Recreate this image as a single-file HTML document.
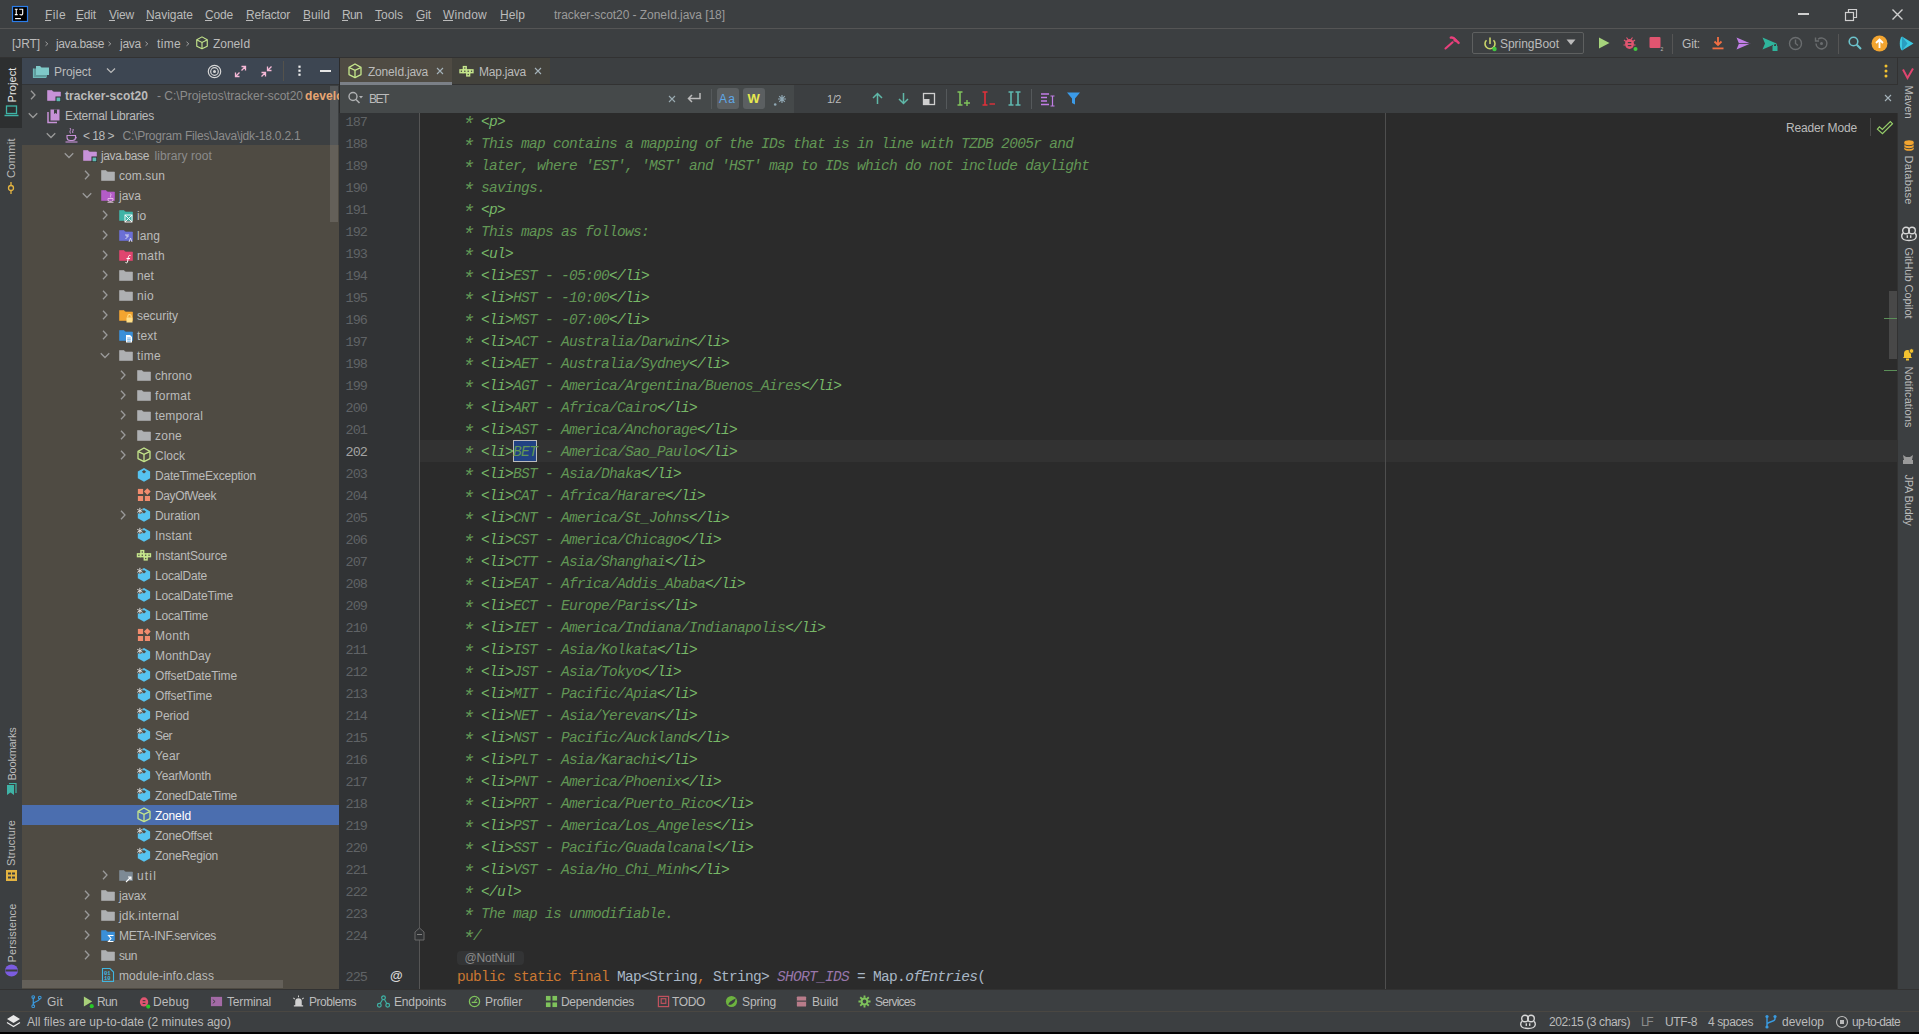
<!DOCTYPE html><html><head><meta charset="utf-8"><style>
*{margin:0;padding:0;box-sizing:border-box}
html,body{width:1919px;height:1034px;overflow:hidden;background:#3c3f41;font-family:"Liberation Sans",sans-serif;font-size:12px;color:#bbbbbb}
.a{position:absolute;white-space:nowrap}
.t{position:absolute;white-space:nowrap;line-height:16px}
svg{position:absolute;overflow:visible}
.code{position:absolute;left:425px;font-family:"Liberation Mono",monospace;font-size:14.5px;letter-spacing:-0.7px;line-height:22px;padding-top:1px;white-space:pre;color:#629755}
.code i{font-style:italic}
.ln{position:absolute;left:339px;width:28px;text-align:right;font-family:"Liberation Mono",monospace;font-size:13.5px;letter-spacing:-0.95px;padding-top:1.5px;line-height:22px;color:#606366}

.tg{color:#77b767;font-style:italic}
.st{display:inline-block;transform:translate(-1.2px,3.4px) scale(1.4)}
</style></head><body>
<div class="a" style="left:0;top:0;width:1919px;height:28px;background:#3c3f41"></div>
<div class="a" style="left:0;top:28px;width:1919px;height:1px;background:#555555"></div>
<div class="a" style="left:0;top:29px;width:1919px;height:28px;background:#3c3f41"></div>
<div class="a" style="left:0;top:57px;width:1919px;height:1px;background:#323232"></div>
<div class="a" style="left:0;top:58px;width:22px;height:931px;background:#3c3f41"></div>
<div class="a" style="left:0;top:58px;width:22px;height:70px;background:#2d2f30"></div>
<div class="a" style="left:22px;top:58px;width:317px;height:26px;background:#3d4652"></div>
<div class="a" style="left:22px;top:84px;width:317px;height:1px;background:#323436"></div>
<div class="a" style="left:22px;top:85px;width:317px;height:60px;background:#3c3f41"></div>
<div class="a" style="left:22px;top:145px;width:317px;height:844px;background:#4f4b43"></div>
<div class="a" style="left:22px;top:805px;width:317px;height:20px;background:#4b6eaf"></div>
<div class="a" style="left:330px;top:86px;width:8px;height:136px;background:rgba(255,255,255,0.12)"></div>
<div class="a" style="left:22px;top:980px;width:261px;height:8px;background:rgba(255,255,255,0.12)"></div>
<div class="a" style="left:339px;top:58px;width:1px;height:931px;background:#2b2b2b"></div>
<div class="a" style="left:340px;top:58px;width:1558px;height:27px;background:#3c3f41"></div>
<div class="a" style="left:340px;top:58px;width:112px;height:27px;background:#4f4b43"></div>
<div class="a" style="left:452px;top:58px;width:98px;height:26px;background:#43423c"></div>
<div class="a" style="left:452px;top:84px;width:1446px;height:1px;background:#323232"></div>
<div class="a" style="left:340px;top:82px;width:112px;height:3px;background:#7b8087"></div>
<div class="a" style="left:340px;top:85px;width:1558px;height:28px;background:#45494a"></div>
<div class="a" style="left:339px;top:113px;width:1559px;height:876px;background:#2b2b2b;overflow:hidden" id="ed"></div>
<div class="a" style="left:339px;top:113px;width:80px;height:876px;background:#313335"></div>
<div class="a" style="left:419px;top:113px;width:1px;height:876px;background:#555555"></div>
<div class="a" style="left:420px;top:440px;width:1478px;height:22px;background:#323232"></div>
<div class="a" style="left:1385px;top:113px;width:1px;height:876px;background:#4e4e4e"></div>
<div class="a" style="left:1898px;top:58px;width:21px;height:931px;background:#3c3f41"></div>
<div class="a" style="left:1897px;top:58px;width:1px;height:931px;background:#323232"></div>
<div class="a" style="left:0;top:989px;width:1919px;height:22px;background:#3c3f41"></div>
<div class="a" style="left:0;top:989px;width:1919px;height:1px;background:#323232"></div>
<div class="a" style="left:0;top:1011px;width:1919px;height:1px;background:#4a4742"></div>
<div class="a" style="left:0;top:1012px;width:1919px;height:20px;background:#3c3f41"></div>
<div class="a" style="left:0;top:1032px;width:1919px;height:2px;background:#000"></div>
<div class="a" style="left:339px;top:113px;width:1559px;height:876px;overflow:hidden">
<div class="ln" style="left:0;top:-3px">187</div>
<div class="code" style="left:86px;top:-3px"><i>     <span class="st">*</span> </i><span class="tg">&lt;p&gt;</span></div>
<div class="ln" style="left:0;top:19px">188</div>
<div class="code" style="left:86px;top:19px"><i>     <span class="st">*</span> This map contains a mapping of the IDs that is in line with TZDB 2005r and</i></div>
<div class="ln" style="left:0;top:41px">189</div>
<div class="code" style="left:86px;top:41px"><i>     <span class="st">*</span> later, where &#x27;EST&#x27;, &#x27;MST&#x27; and &#x27;HST&#x27; map to IDs which do not include daylight</i></div>
<div class="ln" style="left:0;top:63px">190</div>
<div class="code" style="left:86px;top:63px"><i>     <span class="st">*</span> savings.</i></div>
<div class="ln" style="left:0;top:85px">191</div>
<div class="code" style="left:86px;top:85px"><i>     <span class="st">*</span> </i><span class="tg">&lt;p&gt;</span></div>
<div class="ln" style="left:0;top:107px">192</div>
<div class="code" style="left:86px;top:107px"><i>     <span class="st">*</span> This maps as follows:</i></div>
<div class="ln" style="left:0;top:129px">193</div>
<div class="code" style="left:86px;top:129px"><i>     <span class="st">*</span> </i><span class="tg">&lt;ul&gt;</span></div>
<div class="ln" style="left:0;top:151px">194</div>
<div class="code" style="left:86px;top:151px"><i>     <span class="st">*</span> </i><span class="tg">&lt;li&gt;</span><i>EST - -05:00</i><span class="tg">&lt;/li&gt;</span></div>
<div class="ln" style="left:0;top:173px">195</div>
<div class="code" style="left:86px;top:173px"><i>     <span class="st">*</span> </i><span class="tg">&lt;li&gt;</span><i>HST - -10:00</i><span class="tg">&lt;/li&gt;</span></div>
<div class="ln" style="left:0;top:195px">196</div>
<div class="code" style="left:86px;top:195px"><i>     <span class="st">*</span> </i><span class="tg">&lt;li&gt;</span><i>MST - -07:00</i><span class="tg">&lt;/li&gt;</span></div>
<div class="ln" style="left:0;top:217px">197</div>
<div class="code" style="left:86px;top:217px"><i>     <span class="st">*</span> </i><span class="tg">&lt;li&gt;</span><i>ACT - Australia/Darwin</i><span class="tg">&lt;/li&gt;</span></div>
<div class="ln" style="left:0;top:239px">198</div>
<div class="code" style="left:86px;top:239px"><i>     <span class="st">*</span> </i><span class="tg">&lt;li&gt;</span><i>AET - Australia/Sydney</i><span class="tg">&lt;/li&gt;</span></div>
<div class="ln" style="left:0;top:261px">199</div>
<div class="code" style="left:86px;top:261px"><i>     <span class="st">*</span> </i><span class="tg">&lt;li&gt;</span><i>AGT - America/Argentina/Buenos_Aires</i><span class="tg">&lt;/li&gt;</span></div>
<div class="ln" style="left:0;top:283px">200</div>
<div class="code" style="left:86px;top:283px"><i>     <span class="st">*</span> </i><span class="tg">&lt;li&gt;</span><i>ART - Africa/Cairo</i><span class="tg">&lt;/li&gt;</span></div>
<div class="ln" style="left:0;top:305px">201</div>
<div class="code" style="left:86px;top:305px"><i>     <span class="st">*</span> </i><span class="tg">&lt;li&gt;</span><i>AST - America/Anchorage</i><span class="tg">&lt;/li&gt;</span></div>
<div class="ln" style="left:0;top:327px;color:#a4a3a3">202</div>
<div class="code" style="left:86px;top:327px"><i>     <span class="st">*</span> </i><span class="tg">&lt;li&gt;</span><i>BET - America/Sao_Paulo</i><span class="tg">&lt;/li&gt;</span></div>
<div class="ln" style="left:0;top:349px">203</div>
<div class="code" style="left:86px;top:349px"><i>     <span class="st">*</span> </i><span class="tg">&lt;li&gt;</span><i>BST - Asia/Dhaka</i><span class="tg">&lt;/li&gt;</span></div>
<div class="ln" style="left:0;top:371px">204</div>
<div class="code" style="left:86px;top:371px"><i>     <span class="st">*</span> </i><span class="tg">&lt;li&gt;</span><i>CAT - Africa/Harare</i><span class="tg">&lt;/li&gt;</span></div>
<div class="ln" style="left:0;top:393px">205</div>
<div class="code" style="left:86px;top:393px"><i>     <span class="st">*</span> </i><span class="tg">&lt;li&gt;</span><i>CNT - America/St_Johns</i><span class="tg">&lt;/li&gt;</span></div>
<div class="ln" style="left:0;top:415px">206</div>
<div class="code" style="left:86px;top:415px"><i>     <span class="st">*</span> </i><span class="tg">&lt;li&gt;</span><i>CST - America/Chicago</i><span class="tg">&lt;/li&gt;</span></div>
<div class="ln" style="left:0;top:437px">207</div>
<div class="code" style="left:86px;top:437px"><i>     <span class="st">*</span> </i><span class="tg">&lt;li&gt;</span><i>CTT - Asia/Shanghai</i><span class="tg">&lt;/li&gt;</span></div>
<div class="ln" style="left:0;top:459px">208</div>
<div class="code" style="left:86px;top:459px"><i>     <span class="st">*</span> </i><span class="tg">&lt;li&gt;</span><i>EAT - Africa/Addis_Ababa</i><span class="tg">&lt;/li&gt;</span></div>
<div class="ln" style="left:0;top:481px">209</div>
<div class="code" style="left:86px;top:481px"><i>     <span class="st">*</span> </i><span class="tg">&lt;li&gt;</span><i>ECT - Europe/Paris</i><span class="tg">&lt;/li&gt;</span></div>
<div class="ln" style="left:0;top:503px">210</div>
<div class="code" style="left:86px;top:503px"><i>     <span class="st">*</span> </i><span class="tg">&lt;li&gt;</span><i>IET - America/Indiana/Indianapolis</i><span class="tg">&lt;/li&gt;</span></div>
<div class="ln" style="left:0;top:525px">211</div>
<div class="code" style="left:86px;top:525px"><i>     <span class="st">*</span> </i><span class="tg">&lt;li&gt;</span><i>IST - Asia/Kolkata</i><span class="tg">&lt;/li&gt;</span></div>
<div class="ln" style="left:0;top:547px">212</div>
<div class="code" style="left:86px;top:547px"><i>     <span class="st">*</span> </i><span class="tg">&lt;li&gt;</span><i>JST - Asia/Tokyo</i><span class="tg">&lt;/li&gt;</span></div>
<div class="ln" style="left:0;top:569px">213</div>
<div class="code" style="left:86px;top:569px"><i>     <span class="st">*</span> </i><span class="tg">&lt;li&gt;</span><i>MIT - Pacific/Apia</i><span class="tg">&lt;/li&gt;</span></div>
<div class="ln" style="left:0;top:591px">214</div>
<div class="code" style="left:86px;top:591px"><i>     <span class="st">*</span> </i><span class="tg">&lt;li&gt;</span><i>NET - Asia/Yerevan</i><span class="tg">&lt;/li&gt;</span></div>
<div class="ln" style="left:0;top:613px">215</div>
<div class="code" style="left:86px;top:613px"><i>     <span class="st">*</span> </i><span class="tg">&lt;li&gt;</span><i>NST - Pacific/Auckland</i><span class="tg">&lt;/li&gt;</span></div>
<div class="ln" style="left:0;top:635px">216</div>
<div class="code" style="left:86px;top:635px"><i>     <span class="st">*</span> </i><span class="tg">&lt;li&gt;</span><i>PLT - Asia/Karachi</i><span class="tg">&lt;/li&gt;</span></div>
<div class="ln" style="left:0;top:657px">217</div>
<div class="code" style="left:86px;top:657px"><i>     <span class="st">*</span> </i><span class="tg">&lt;li&gt;</span><i>PNT - America/Phoenix</i><span class="tg">&lt;/li&gt;</span></div>
<div class="ln" style="left:0;top:679px">218</div>
<div class="code" style="left:86px;top:679px"><i>     <span class="st">*</span> </i><span class="tg">&lt;li&gt;</span><i>PRT - America/Puerto_Rico</i><span class="tg">&lt;/li&gt;</span></div>
<div class="ln" style="left:0;top:701px">219</div>
<div class="code" style="left:86px;top:701px"><i>     <span class="st">*</span> </i><span class="tg">&lt;li&gt;</span><i>PST - America/Los_Angeles</i><span class="tg">&lt;/li&gt;</span></div>
<div class="ln" style="left:0;top:723px">220</div>
<div class="code" style="left:86px;top:723px"><i>     <span class="st">*</span> </i><span class="tg">&lt;li&gt;</span><i>SST - Pacific/Guadalcanal</i><span class="tg">&lt;/li&gt;</span></div>
<div class="ln" style="left:0;top:745px">221</div>
<div class="code" style="left:86px;top:745px"><i>     <span class="st">*</span> </i><span class="tg">&lt;li&gt;</span><i>VST - Asia/Ho_Chi_Minh</i><span class="tg">&lt;/li&gt;</span></div>
<div class="ln" style="left:0;top:767px">222</div>
<div class="code" style="left:86px;top:767px"><i>     <span class="st">*</span> </i><span class="tg">&lt;/ul&gt;</span></div>
<div class="ln" style="left:0;top:789px">223</div>
<div class="code" style="left:86px;top:789px"><i>     <span class="st">*</span> The map is unmodifiable.</i></div>
<div class="ln" style="left:0;top:811px">224</div>
<div class="code" style="left:86px;top:811px"><i>     <span class="st">*</span>/</i></div>
<div class="a" style="left:174px;top:327px;width:24px;height:22px;background:#214283;border:1px solid #bbbbbb"></div>
<div class="code" style="left:174px;top:327px"><i>BET</i></div>
<div class="a" style="left:118px;top:838px;width:67px;height:14px;background:#333435;border-radius:4px"></div>
<div class="t" style="left:125.5px;top:837.3px;color:#8a8a8a;font-size:12px;letter-spacing:-0.2px">@NotNull</div>
<div class="ln" style="left:0;top:852px">225</div>
<div class="code" style="left:86px;top:852px;color:#a9b7c6">    <span style="color:#cc7832">public static final </span>Map&lt;String<span style="color:#cc7832">, </span>String&gt; <i style="color:#9876aa">SHORT_IDS</i> = Map.<i>ofEntries</i>(</div>
</div>
<svg style="left:12px;top:6px" width="16" height="16" viewBox="0 0 16 16"><rect x="0.5" y="0.5" width="15" height="15" fill="#000" stroke="#2b7de9" stroke-width="1.2"/><path d="M2.8 3.2H5.7M4.25 3.2V8.6M2.8 8.6H5.7M7.2 3.2H11.2M10.7 3.2V7.6C10.7 9 9.5 9.2 7.6 8.6" fill="none" stroke="#fff" stroke-width="1.1"/><rect x="3.1" y="12" width="5.8" height="1.2" fill="#fff"/></svg>
<div class="t" style="left:45.0px;top:6.5px;color:#bbbbbb;font-size:12px;letter-spacing:0.416px;">File</div>
<div class="a" style="left:45px;top:20px;width:6px;height:1px;background:#bbbbbb"></div>
<div class="t" style="left:76.0px;top:6.5px;color:#bbbbbb;font-size:12px;letter-spacing:-0.170px;">Edit</div>
<div class="a" style="left:76px;top:20px;width:6px;height:1px;background:#bbbbbb"></div>
<div class="t" style="left:109.0px;top:6.5px;color:#bbbbbb;font-size:12px;letter-spacing:-0.199px;">View</div>
<div class="a" style="left:109px;top:20px;width:6px;height:1px;background:#bbbbbb"></div>
<div class="t" style="left:146.0px;top:6.5px;color:#bbbbbb;font-size:12px;letter-spacing:-0.046px;">Navigate</div>
<div class="a" style="left:146px;top:20px;width:7px;height:1px;background:#bbbbbb"></div>
<div class="t" style="left:205.0px;top:6.5px;color:#bbbbbb;font-size:12px;letter-spacing:-0.172px;">Code</div>
<div class="a" style="left:205px;top:20px;width:7px;height:1px;background:#bbbbbb"></div>
<div class="t" style="left:246.0px;top:6.5px;color:#bbbbbb;font-size:12px;letter-spacing:-0.169px;">Refactor</div>
<div class="a" style="left:246px;top:20px;width:7px;height:1px;background:#bbbbbb"></div>
<div class="t" style="left:303.0px;top:6.5px;color:#bbbbbb;font-size:12px;letter-spacing:0.063px;">Build</div>
<div class="a" style="left:303px;top:20px;width:7px;height:1px;background:#bbbbbb"></div>
<div class="t" style="left:342.0px;top:6.5px;color:#bbbbbb;font-size:12px;letter-spacing:-0.672px;">Run</div>
<div class="a" style="left:342px;top:20px;width:6px;height:1px;background:#bbbbbb"></div>
<div class="t" style="left:375.0px;top:6.5px;color:#bbbbbb;font-size:12px;letter-spacing:-0.003px;">Tools</div>
<div class="a" style="left:375px;top:20px;width:6px;height:1px;background:#bbbbbb"></div>
<div class="t" style="left:416.0px;top:6.5px;color:#bbbbbb;font-size:12px;letter-spacing:-0.112px;">Git</div>
<div class="a" style="left:416px;top:20px;width:8px;height:1px;background:#bbbbbb"></div>
<div class="t" style="left:443.0px;top:6.5px;color:#bbbbbb;font-size:12px;letter-spacing:0.220px;">Window</div>
<div class="a" style="left:443px;top:20px;width:10px;height:1px;background:#bbbbbb"></div>
<div class="t" style="left:500.0px;top:6.5px;color:#bbbbbb;font-size:12px;letter-spacing:0.080px;">Help</div>
<div class="a" style="left:500px;top:20px;width:7px;height:1px;background:#bbbbbb"></div>
<div class="t" style="left:554.0px;top:6.5px;color:#9b9b9b;font-size:12px;letter-spacing:-0.053px;">tracker-scot20 - ZoneId.java [18]</div>
<div class="a" style="left:1798px;top:13px;width:11px;height:2px;background:#cfcfcf"></div>
<svg style="left:1844px;top:8px" width="14" height="14" viewBox="0 0 14 14"><rect x="1.5" y="4.5" width="8" height="8" fill="none" stroke="#cfcfcf" stroke-width="1.2"/><path d="M4.5 4.5V1.5H12.5V9.5H9.5" fill="none" stroke="#cfcfcf" stroke-width="1.2"/></svg>
<svg style="left:1891px;top:8px" width="13" height="13" viewBox="0 0 13 13"><path d="M1.5 1.5L11.5 11.5M11.5 1.5L1.5 11.5" stroke="#cfcfcf" stroke-width="1.4"/></svg>
<div class="t" style="left:12.0px;top:35.5px;color:#bbbbbb;font-size:12px;letter-spacing:-0.090px;">[JRT]</div>
<svg style="left:44px;top:38px" width="6" height="10" viewBox="0 0 6 10"><path d="M1.5 3.8L3.8 5.8L1.5 7.8" fill="none" stroke="#a0a0a0" stroke-width="1"/></svg>
<svg style="left:107.3px;top:38px" width="6" height="10" viewBox="0 0 6 10"><path d="M1.5 3.8L3.8 5.8L1.5 7.8" fill="none" stroke="#a0a0a0" stroke-width="1"/></svg>
<svg style="left:144px;top:38px" width="6" height="10" viewBox="0 0 6 10"><path d="M1.5 3.8L3.8 5.8L1.5 7.8" fill="none" stroke="#a0a0a0" stroke-width="1"/></svg>
<svg style="left:184.6px;top:38px" width="6" height="10" viewBox="0 0 6 10"><path d="M1.5 3.8L3.8 5.8L1.5 7.8" fill="none" stroke="#a0a0a0" stroke-width="1"/></svg>
<div class="t" style="left:56.0px;top:35.5px;color:#bbbbbb;font-size:12px;letter-spacing:-0.375px;">java.base</div>
<div class="t" style="left:120.0px;top:35.5px;color:#bbbbbb;font-size:12px;letter-spacing:-0.254px;">java</div>
<div class="t" style="left:157.0px;top:35.5px;color:#bbbbbb;font-size:12px;letter-spacing:0.332px;">time</div>
<svg style="left:195px;top:36px" width="14" height="14" viewBox="0 0 16 16"><path d="M8 1L14 4.4V11.6L8 14.6L2 11.6V4.4Z" fill="none" stroke="#c5e68c" stroke-width="1.3" stroke-linejoin="round"/><path d="M2.3 4.6L8 7.4L13.7 4.6M8 7.4V14.3" fill="none" stroke="#c5e68c" stroke-width="1.3"/></svg>
<div class="t" style="left:213.0px;top:35.5px;color:#bbbbbb;font-size:12px;letter-spacing:-0.060px;">ZoneId</div>
<svg style="left:1444px;top:35px" width="17" height="17" viewBox="0 0 17 17"><path d="M1.5 13.5L8.6 7.3" stroke="#e8407c" stroke-width="2.1" stroke-linecap="round"/><path d="M6.8 2.6C9 2 10.5 3.5 11.5 5L14.6 7.9" fill="none" stroke="#e8407c" stroke-width="2.4" stroke-linecap="round"/><path d="M10.2 4.2L12.2 6.4" stroke="#e8407c" stroke-width="2.8"/></svg>
<div class="a" style="left:1472px;top:32px;width:112px;height:22px;border:1px solid #5e6060;border-radius:2px;background:#3c3f41"></div>
<svg style="left:1482px;top:36px" width="16" height="16" viewBox="0 0 16 16"><path d="M4.5 4.2A5 5 0 1 0 11.5 4.2" fill="none" stroke="#c9d46a" stroke-width="1.6"/><path d="M8 1.5V8" stroke="#c9d46a" stroke-width="1.6"/><circle cx="12.5" cy="13" r="2.2" fill="#41c841"/></svg>
<div class="t" style="left:1500.0px;top:35.5px;color:#bbbbbb;font-size:12px;letter-spacing:-0.038px;">SpringBoot</div>
<svg style="left:1566px;top:39px" width="10" height="7" viewBox="0 0 10 7"><path d="M0.5 0.5H9.5L5 6Z" fill="#bbbbbb"/></svg>
<svg style="left:1597px;top:36px" width="14" height="14" viewBox="0 0 14 14"><path d="M2 1.5L12.5 7L2 12.5Z" fill="#a6d47c"/></svg>
<svg style="left:1622px;top:35px" width="17" height="17" viewBox="0 0 17 17"><ellipse cx="7.5" cy="9" rx="4.5" ry="5" fill="#e05570"/><path d="M2 5L4 6.5M13 5L11 6.5M1.5 10H3M12 10H13.5M4.5 2.5L6 4.5M10.5 2.5L9 4.5" stroke="#e05570" stroke-width="1.2"/><rect x="5.8" y="7" width="3.5" height="1.2" fill="#3c3f41"/><rect x="5.8" y="10" width="3.5" height="1.2" fill="#3c3f41"/><circle cx="13.5" cy="14" r="2" fill="#41c841"/></svg>
<svg style="left:1648px;top:35px" width="17" height="17" viewBox="0 0 17 17"><rect x="1.5" y="2" width="11" height="11" rx="1" fill="#e05570"/><text x="12.5" y="15.5" font-size="5" fill="#bbb" font-family="Liberation Sans">2</text></svg>
<div class="a" style="left:1672px;top:34px;width:1px;height:20px;background:#555"></div>
<div class="t" style="left:1682.0px;top:35.5px;color:#bbbbbb;font-size:12px;letter-spacing:-0.167px;">Git:</div>
<svg style="left:1710px;top:35px" width="16" height="16" viewBox="0 0 16 16"><path d="M8 2V10M4.5 6.5L8 10L11.5 6.5" fill="none" stroke="#f26f43" stroke-width="1.8"/><rect x="2.5" y="12.5" width="11" height="1.8" fill="#f26f43"/></svg>
<svg style="left:1735px;top:35px" width="17" height="17" viewBox="0 0 17 17"><path d="M1.5 2.5L15.5 8.5L1.5 14.5L4 8.5Z" fill="#c17ee6"/><path d="M4 8.5H15" stroke="#3c3f41" stroke-width="0.8"/></svg>
<svg style="left:1761px;top:35px" width="18" height="18" viewBox="0 0 18 18"><path d="M1.5 2.5L15.5 8.5L1.5 14.5L4 8.5Z" fill="#2fb59c"/><rect x="11.5" y="11" width="5" height="5" fill="#2fb59c"/><path d="M12.5 11V9.8A1.5 1.5 0 0 1 15.5 9.8V11" fill="none" stroke="#2fb59c" stroke-width="1"/></svg>
<svg style="left:1787px;top:35px" width="17" height="17" viewBox="0 0 17 17"><circle cx="8.5" cy="8.5" r="6" fill="none" stroke="#6a6d6f" stroke-width="1.4"/><path d="M8.5 4.5V8.5L11 10.5" fill="none" stroke="#6a6d6f" stroke-width="1.4"/></svg>
<svg style="left:1813px;top:35px" width="17" height="17" viewBox="0 0 17 17"><path d="M3 8.5A5.5 5.5 0 1 0 5 4.2" fill="none" stroke="#6a6d6f" stroke-width="1.4"/><path d="M2.5 2.5V6H6" fill="none" stroke="#6a6d6f" stroke-width="1.4"/><circle cx="8.5" cy="8.5" r="1.5" fill="#6a6d6f"/></svg>
<div class="a" style="left:1838px;top:34px;width:1px;height:20px;background:#555"></div>
<svg style="left:1847px;top:35px" width="16" height="16" viewBox="0 0 16 16"><circle cx="6.5" cy="6.5" r="4.3" fill="none" stroke="#6cc3cc" stroke-width="1.6"/><path d="M9.8 9.8L14 14" stroke="#6cc3cc" stroke-width="2"/></svg>
<svg style="left:1871px;top:35px" width="17" height="17" viewBox="0 0 17 17"><circle cx="8.5" cy="8.5" r="8" fill="#f3a530"/><path d="M8.5 13V4.5M5 8L8.5 4.5L12 8" fill="none" stroke="#fff" stroke-width="1.8"/></svg>
<svg style="left:1898px;top:35px" width="17" height="17" viewBox="0 0 17 17"><path d="M4 1.5C1 3.5 1 13.5 4 15.5L15.5 8.5Z" fill="#3cc8e0"/><path d="M4 1.5L9.5 8.5L4 15.5" fill="#2a9ec0"/></svg>
<div class="t" style="left:-6.5px;top:76.5px;width:35.0px;height:16px;color:#e6e6e6;font-size:11px;letter-spacing:0.109px;transform:rotate(-90deg);transform-origin:50% 50%;text-align:left">Project</div>
<svg style="left:4px;top:104px" width="15" height="14" viewBox="0 0 15 14"><rect x="2.5" y="2" width="10" height="7.5" fill="none" stroke="#3fb3a6" stroke-width="1.3"/><path d="M0.5 11.5H14.5" stroke="#3fb3a6" stroke-width="1.5"/></svg>
<div class="t" style="left:-9.0px;top:150.0px;width:40.0px;height:16px;color:#bbbbbb;font-size:11px;letter-spacing:0.352px;transform:rotate(-90deg);transform-origin:50% 50%;text-align:left">Commit</div>
<svg style="left:5px;top:181px" width="12" height="14" viewBox="0 0 12 14"><circle cx="6" cy="7" r="2.5" fill="none" stroke="#e3b341" stroke-width="1.3"/><path d="M6 1V4.5M6 9.5V13" stroke="#e3b341" stroke-width="1.3"/></svg>
<div class="t" style="left:-15.5px;top:745.5px;width:53.0px;height:16px;color:#bbbbbb;font-size:11px;letter-spacing:-0.224px;transform:rotate(-90deg);transform-origin:50% 50%;text-align:left">Bookmarks</div>
<svg style="left:4px;top:782px" width="15" height="15" viewBox="0 0 15 15"><path d="M3 3H10V13L6.5 10.5L3 13Z" fill="#3fb3a6"/><path d="M5 1.5H12V11" fill="none" stroke="#3fb3a6" stroke-width="1.2"/></svg>
<div class="t" style="left:-12.0px;top:835.0px;width:46.0px;height:16px;color:#bbbbbb;font-size:11px;letter-spacing:0.152px;transform:rotate(-90deg);transform-origin:50% 50%;text-align:left">Structure</div>
<svg style="left:4px;top:868px" width="15" height="15" viewBox="0 0 15 15"><rect x="2" y="2" width="11" height="11" fill="#e3b341"/><rect x="4" y="4.5" width="3" height="2" fill="#3c3f41"/><rect x="8" y="4.5" width="3" height="2" fill="#3c3f41"/><rect x="4" y="8.5" width="3" height="2" fill="#3c3f41"/><rect x="8" y="8.5" width="3" height="2" fill="#3c3f41"/></svg>
<div class="t" style="left:-18.5px;top:924.5px;width:59.0px;height:16px;color:#bbbbbb;font-size:11px;letter-spacing:0.139px;transform:rotate(-90deg);transform-origin:50% 50%;text-align:left">Persistence</div>
<svg style="left:4px;top:963px" width="15" height="15" viewBox="0 0 15 15"><ellipse cx="7.5" cy="7.5" rx="6.5" ry="6" fill="#7b5ce0"/><rect x="1.5" y="6.5" width="12" height="2" fill="#3c3f41"/></svg>
<svg style="left:1901px;top:67px" width="14" height="13" viewBox="0 0 14 13"><path d="M2 2.5L6.5 11L12 1.5" fill="none" stroke="#e0456f" stroke-width="2"/></svg>
<div class="t" style="left:1892.0px;top:93.5px;width:33.0px;height:16px;color:#bbbbbb;font-size:11px;letter-spacing:-0.003px;transform:rotate(90deg);transform-origin:50% 50%;text-align:left">Maven</div>
<svg style="left:1904px;top:140px" width="10" height="11" viewBox="0 0 10 11"><rect x="0.4" y="2" width="9.2" height="7" fill="#f3a530"/><ellipse cx="5" cy="2" rx="4.6" ry="1.8" fill="#f3a530"/><ellipse cx="5" cy="9" rx="4.6" ry="1.8" fill="#f3a530"/><path d="M0.4 3.9A4.6 1.8 0 0 0 9.6 3.9M0.4 6.9A4.6 1.8 0 0 0 9.6 6.9" fill="none" stroke="#3c3f41" stroke-width="0.9"/></svg>
<div class="t" style="left:1884.0px;top:171.5px;width:49.0px;height:16px;color:#bbbbbb;font-size:11px;letter-spacing:0.239px;transform:rotate(90deg);transform-origin:50% 50%;text-align:left">Database</div>
<svg style="left:1901px;top:226px" width="16" height="16" viewBox="0 0 16 16"><circle cx="5" cy="4.5" r="3.3" fill="none" stroke="#d6d6d6" stroke-width="1.4"/><circle cx="11" cy="4.5" r="3.3" fill="none" stroke="#d6d6d6" stroke-width="1.4"/><path d="M2 7.5C0.8 8 0.6 9.5 0.8 11C1.2 13.5 4 14.5 8 14.5C12 14.5 14.8 13.5 15.2 11C15.4 9.5 15.2 8 14 7.5" fill="none" stroke="#d6d6d6" stroke-width="1.4"/><rect x="5.6" y="9.3" width="1.4" height="2.6" fill="#d6d6d6"/><rect x="9" y="9.3" width="1.4" height="2.6" fill="#d6d6d6"/></svg>
<div class="t" style="left:1873.0px;top:274.5px;width:71.0px;height:16px;color:#bbbbbb;font-size:11px;letter-spacing:-0.038px;transform:rotate(90deg);transform-origin:50% 50%;text-align:left">GitHub Copilot</div>
<svg style="left:1901px;top:348px" width="13" height="13" viewBox="0 0 13 13"><path d="M2 10H11L10 8.5V5.5A3.5 3.5 0 0 0 3 5.5V8.5Z" fill="#f3c230"/><rect x="5" y="10.5" width="3" height="2" fill="#f3c230"/><circle cx="10.5" cy="3" r="2.3" fill="#f3c230" stroke="#3c3f41" stroke-width="0.8"/></svg>
<div class="t" style="left:1878.0px;top:388.5px;width:61.0px;height:16px;color:#bbbbbb;font-size:11px;letter-spacing:0.083px;transform:rotate(90deg);transform-origin:50% 50%;text-align:left">Notifications</div>
<svg style="left:1900px;top:451px" width="16" height="18" viewBox="0 0 16 18"><path d="M3 9H13V13H3Z M5 13V16M11 13V16M4 9L3 4L6 6H10L13 4L12 9" fill="#9a9a9a"/></svg>
<div class="t" style="left:1883.0px;top:491.5px;width:51.0px;height:16px;color:#bbbbbb;font-size:11px;letter-spacing:-0.222px;transform:rotate(90deg);transform-origin:50% 50%;text-align:left">JPA Buddy</div>
<svg style="left:32px;top:63px" width="18" height="16" viewBox="0 0 18 16"><path d="M1.5 5.5H6L7.5 7H15V14.5H1.5Z" fill="#5e9b9c"/><path d="M4 3H8L9.5 4.5H17V12H4Z" fill="#7ec8c8"/><path d="M1.5 5.5V14.5H14" fill="none" stroke="#6fb8b8" stroke-width="1.2"/></svg>
<div class="t" style="left:54.0px;top:63.5px;color:#bbbbbb;font-size:12px;letter-spacing:-0.050px;">Project</div>
<svg style="left:106px;top:67px" width="10" height="8" viewBox="0 0 10 8"><path d="M1 1.5L5 5.5L9 1.5" fill="none" stroke="#bbbbbb" stroke-width="1.2"/></svg>
<svg style="left:207px;top:64px" width="15" height="15" viewBox="0 0 15 15"><circle cx="7.5" cy="7.5" r="6.2" fill="none" stroke="#d6d6d6" stroke-width="1.2"/><circle cx="7.5" cy="7.5" r="3.8" fill="none" stroke="#d6d6d6" stroke-width="1.2"/><circle cx="7.5" cy="7.5" r="1.5" fill="#d6d6d6"/></svg>
<svg style="left:233px;top:64px" width="15" height="15" viewBox="0 0 15 15"><path d="M2.5 12.5L6.5 8.5M12.5 2.5L8.5 6.5M2.5 8.5V12.5H6.5M12.5 6.5V2.5H8.5" fill="none" stroke="#f5b8d6" stroke-width="1.3"/></svg>
<svg style="left:259px;top:64px" width="15" height="15" viewBox="0 0 15 15"><path d="M2.5 12.5L6.5 8.5M12.5 2.5L8.5 6.5M2.5 8.5H6.5V12.5M12.5 6.5H8.5V2.5" fill="none" stroke="#f5b8d6" stroke-width="1.3"/></svg>
<div class="a" style="left:283px;top:61px;width:1px;height:20px;background:#54524c"></div>
<svg style="left:297px;top:65px" width="5" height="15" viewBox="0 0 5 15"><rect x="1.4" y="0.6" width="2.2" height="2.2" fill="#eeeeee"/><rect x="1.4" y="4.6" width="2.2" height="2.2" fill="#eeeeee"/><rect x="1.4" y="8.6" width="2.2" height="2.2" fill="#eeeeee"/></svg>
<div class="a" style="left:320px;top:70px;width:11px;height:2px;background:#e6e6e6"></div>
<svg style="left:25px;top:87px" width="16" height="16" viewBox="0 0 16 16"><path d="M6 3.75L10 8L6 12.25" fill="none" stroke="#9a9a9a" stroke-width="1.3"/></svg>
<svg style="left:46px;top:87px" width="16" height="16" viewBox="0 0 16 16"><path d="M1.5 3.5h4.5l1.5 1.5h7v8.5h-13z" fill="#c792d8" stroke="#c792d8" stroke-width="0.6" stroke-linejoin="round"/><rect x="9.5" y="9.5" width="5.5" height="5.5" fill="#2b2b2b"/><rect x="10.5" y="10.5" width="3.8" height="3.8" fill="#5fb8b0"/></svg>
<div class="t" style="left:65.0px;top:88.0px;color:#bbbbbb;font-size:12px;font-weight:bold;letter-spacing:0.068px;">tracker-scot20</div>
<div class="t" style="left:157.0px;top:88.0px;color:#8c8c8c;font-size:12px;letter-spacing:-0.002px;">- C:\Projetos\tracker-scot20</div>
<div class="a" style="left:305px;top:85px;width:34px;height:20px;overflow:hidden"><div class="t" style="left:0.0px;top:3.0px;color:#e8a673;font-size:12px;font-weight:bold;letter-spacing:0.093px;">develop</div></div>
<svg style="left:25px;top:107px" width="16" height="16" viewBox="0 0 16 16"><path d="M3.75 6.25L8 10.5L12.25 6.25" fill="none" stroke="#9a9a9a" stroke-width="1.3"/></svg>
<svg style="left:46px;top:107px" width="16" height="16" viewBox="0 0 16 16"><path d="M4.5 2.5H13.5V13.5H4.5Z" fill="#c792d8"/><path d="M2 5V15.5H11" fill="none" stroke="#c792d8" stroke-width="1.5"/><path d="M8 2.5V7L9.5 6L11 7V2.5" fill="#3c3f41"/></svg>
<div class="t" style="left:65.0px;top:108.0px;color:#bbbbbb;font-size:12px;letter-spacing:-0.243px;">External Libraries</div>
<svg style="left:43px;top:127px" width="16" height="16" viewBox="0 0 16 16"><path d="M3.75 6.25L8 10.5L12.25 6.25" fill="none" stroke="#9a9a9a" stroke-width="1.3"/></svg>
<svg style="left:64px;top:127px" width="16" height="16" viewBox="0 0 16 16"><path d="M6 1C8 3 4.5 4 6.5 6.5M9 2C10 3.5 7.5 4.5 9 6" fill="none" stroke="#c792d8" stroke-width="1"/><path d="M3 8.5H11.5V10.5A3 3 0 0 1 8.5 13.5H6A3 3 0 0 1 3 10.5Z" fill="none" stroke="#c792d8" stroke-width="1.1"/><path d="M11.5 9.2A1.6 1.6 0 0 1 11.5 12" fill="none" stroke="#c792d8" stroke-width="1"/><path d="M1.5 15H13.5" stroke="#c792d8" stroke-width="1.1"/></svg>
<div class="t" style="left:83.0px;top:128.0px;color:#bbbbbb;font-size:12px;letter-spacing:-0.505px;">&lt; 18 &gt;</div>
<div class="t" style="left:122.5px;top:128.0px;color:#8c8c8c;font-size:12px;letter-spacing:-0.199px;">C:\Program Files\Java\jdk-18.0.2.1</div>
<svg style="left:61px;top:147px" width="16" height="16" viewBox="0 0 16 16"><path d="M3.75 6.25L8 10.5L12.25 6.25" fill="none" stroke="#9a9a9a" stroke-width="1.3"/></svg>
<svg style="left:82px;top:147px" width="16" height="16" viewBox="0 0 16 16"><path d="M1.5 3.5h4.5l1.5 1.5h7v8.5h-13z" fill="#c792d8" stroke="#c792d8" stroke-width="0.6" stroke-linejoin="round"/><rect x="9.5" y="9.5" width="5.5" height="5.5" fill="#2b2b2b"/><rect x="10.5" y="10.5" width="3.8" height="3.8" fill="#5fb8b0"/></svg>
<div class="t" style="left:101.0px;top:148.0px;color:#bbbbbb;font-size:12px;letter-spacing:-0.375px;">java.base</div>
<div class="t" style="left:154.5px;top:148.0px;color:#8c8c8c;font-size:12px;letter-spacing:0.068px;">library root</div>
<svg style="left:79px;top:167px" width="16" height="16" viewBox="0 0 16 16"><path d="M6 3.75L10 8L6 12.25" fill="none" stroke="#9a9a9a" stroke-width="1.3"/></svg>
<svg style="left:100px;top:167px" width="16" height="16" viewBox="0 0 16 16"><path d="M1.5 3.5h4.5l1.5 1.5h7v8.5h-13z" fill="#aeb0b2" stroke="#aeb0b2" stroke-width="0.6" stroke-linejoin="round"/></svg>
<div class="t" style="left:119.0px;top:168.0px;color:#bbbbbb;font-size:12px;letter-spacing:0.092px;">com.sun</div>
<svg style="left:79px;top:187px" width="16" height="16" viewBox="0 0 16 16"><path d="M3.75 6.25L8 10.5L12.25 6.25" fill="none" stroke="#9a9a9a" stroke-width="1.3"/></svg>
<svg style="left:100px;top:187px" width="16" height="16" viewBox="0 0 16 16"><path d="M1.5 3.5h4.5l1.5 1.5h7v8.5h-13z" fill="#b45cc8" stroke="#b45cc8" stroke-width="0.6" stroke-linejoin="round"/><path d="M10.5 6.5C12 8 9.5 8.8 10.8 10.5" fill="none" stroke="#f0d0f0" stroke-width="0.8"/><path d="M8 11.5H13V12.8A1.6 1.6 0 0 1 11.4 14.4H9.6A1.6 1.6 0 0 1 8 12.8Z" fill="none" stroke="#f0d0f0" stroke-width="0.8"/><path d="M7.5 15.3H13.5" stroke="#f0d0f0" stroke-width="0.8"/></svg>
<div class="t" style="left:119.0px;top:188.0px;color:#bbbbbb;font-size:12px;letter-spacing:-0.004px;">java</div>
<svg style="left:97px;top:207px" width="16" height="16" viewBox="0 0 16 16"><path d="M6 3.75L10 8L6 12.25" fill="none" stroke="#9a9a9a" stroke-width="1.3"/></svg>
<svg style="left:118px;top:207px" width="16" height="16" viewBox="0 0 16 16"><path d="M1.5 3.5h4.5l1.5 1.5h7v8.5h-13z" fill="#3fb3a6" stroke="#3fb3a6" stroke-width="0.6" stroke-linejoin="round"/><rect x="7" y="8" width="7" height="7" fill="none" stroke="#fff" stroke-width="0.9"/><path d="M7 8L14 15M14 8L7 15" stroke="#fff" stroke-width="0.9"/></svg>
<div class="t" style="left:137.0px;top:208.0px;color:#bbbbbb;font-size:12px;letter-spacing:-0.170px;">io</div>
<svg style="left:97px;top:227px" width="16" height="16" viewBox="0 0 16 16"><path d="M6 3.75L10 8L6 12.25" fill="none" stroke="#9a9a9a" stroke-width="1.3"/></svg>
<svg style="left:118px;top:227px" width="16" height="16" viewBox="0 0 16 16"><path d="M1.5 3.5h4.5l1.5 1.5h7v8.5h-13z" fill="#6b6fd6" stroke="#6b6fd6" stroke-width="0.6" stroke-linejoin="round"/><path d="M7 8H11M9 8V10M7.5 12L10.5 9M11 15L12.5 11L14 15" fill="none" stroke="#dde" stroke-width="0.9"/></svg>
<div class="t" style="left:137.0px;top:228.0px;color:#bbbbbb;font-size:12px;letter-spacing:0.078px;">lang</div>
<svg style="left:97px;top:247px" width="16" height="16" viewBox="0 0 16 16"><path d="M6 3.75L10 8L6 12.25" fill="none" stroke="#9a9a9a" stroke-width="1.3"/></svg>
<svg style="left:118px;top:247px" width="16" height="16" viewBox="0 0 16 16"><path d="M1.5 3.5h4.5l1.5 1.5h7v8.5h-13z" fill="#e0456f" stroke="#e0456f" stroke-width="0.6" stroke-linejoin="round"/><path d="M12.5 8.5C11 8 10.5 9 10.3 10.5L9.5 15C9.3 16 8.5 16 7.5 15.5M8.5 11.5H12" fill="none" stroke="#fff" stroke-width="1"/></svg>
<div class="t" style="left:137.0px;top:248.0px;color:#bbbbbb;font-size:12px;letter-spacing:0.330px;">math</div>
<svg style="left:97px;top:267px" width="16" height="16" viewBox="0 0 16 16"><path d="M6 3.75L10 8L6 12.25" fill="none" stroke="#9a9a9a" stroke-width="1.3"/></svg>
<svg style="left:118px;top:267px" width="16" height="16" viewBox="0 0 16 16"><path d="M1.5 3.5h4.5l1.5 1.5h7v8.5h-13z" fill="#aeb0b2" stroke="#aeb0b2" stroke-width="0.6" stroke-linejoin="round"/></svg>
<div class="t" style="left:137.0px;top:268.0px;color:#bbbbbb;font-size:12px;letter-spacing:0.106px;">net</div>
<svg style="left:97px;top:287px" width="16" height="16" viewBox="0 0 16 16"><path d="M6 3.75L10 8L6 12.25" fill="none" stroke="#9a9a9a" stroke-width="1.3"/></svg>
<svg style="left:118px;top:287px" width="16" height="16" viewBox="0 0 16 16"><path d="M1.5 3.5h4.5l1.5 1.5h7v8.5h-13z" fill="#aeb0b2" stroke="#aeb0b2" stroke-width="0.6" stroke-linejoin="round"/></svg>
<div class="t" style="left:137.0px;top:288.0px;color:#bbbbbb;font-size:12px;letter-spacing:0.328px;">nio</div>
<svg style="left:97px;top:307px" width="16" height="16" viewBox="0 0 16 16"><path d="M6 3.75L10 8L6 12.25" fill="none" stroke="#9a9a9a" stroke-width="1.3"/></svg>
<svg style="left:118px;top:307px" width="16" height="16" viewBox="0 0 16 16"><path d="M1.5 3.5h4.5l1.5 1.5h7v8.5h-13z" fill="#f3a530" stroke="#f3a530" stroke-width="0.6" stroke-linejoin="round"/><rect x="8.5" y="10.5" width="6" height="5" fill="#ffe08a"/><path d="M9.8 10.5V9.2A1.7 1.7 0 0 1 13.2 9.2V10.5" fill="none" stroke="#ffe08a" stroke-width="1.1"/></svg>
<div class="t" style="left:137.0px;top:308.0px;color:#bbbbbb;font-size:12px;letter-spacing:-0.043px;">security</div>
<svg style="left:97px;top:327px" width="16" height="16" viewBox="0 0 16 16"><path d="M6 3.75L10 8L6 12.25" fill="none" stroke="#9a9a9a" stroke-width="1.3"/></svg>
<svg style="left:118px;top:327px" width="16" height="16" viewBox="0 0 16 16"><path d="M1.5 3.5h4.5l1.5 1.5h7v8.5h-13z" fill="#3a8fd8" stroke="#3a8fd8" stroke-width="0.6" stroke-linejoin="round"/><path d="M8 8H12L14 10V15.5H8Z" fill="#fff"/><path d="M9.2 11H12.8M9.2 12.7H12.8M9.2 14.2H12.8" stroke="#3a8fd8" stroke-width="0.7"/></svg>
<div class="t" style="left:137.0px;top:328.0px;color:#bbbbbb;font-size:12px;letter-spacing:0.164px;">text</div>
<svg style="left:97px;top:347px" width="16" height="16" viewBox="0 0 16 16"><path d="M3.75 6.25L8 10.5L12.25 6.25" fill="none" stroke="#9a9a9a" stroke-width="1.3"/></svg>
<svg style="left:118px;top:347px" width="16" height="16" viewBox="0 0 16 16"><path d="M1.5 3.5h4.5l1.5 1.5h7v8.5h-13z" fill="#aeb0b2" stroke="#aeb0b2" stroke-width="0.6" stroke-linejoin="round"/></svg>
<div class="t" style="left:137.0px;top:348.0px;color:#bbbbbb;font-size:12px;letter-spacing:0.332px;">time</div>
<svg style="left:115px;top:367px" width="16" height="16" viewBox="0 0 16 16"><path d="M6 3.75L10 8L6 12.25" fill="none" stroke="#9a9a9a" stroke-width="1.3"/></svg>
<svg style="left:136px;top:367px" width="16" height="16" viewBox="0 0 16 16"><path d="M1.5 3.5h4.5l1.5 1.5h7v8.5h-13z" fill="#aeb0b2" stroke="#aeb0b2" stroke-width="0.6" stroke-linejoin="round"/></svg>
<div class="t" style="left:155.0px;top:368.0px;color:#bbbbbb;font-size:12px;letter-spacing:0.051px;">chrono</div>
<svg style="left:115px;top:387px" width="16" height="16" viewBox="0 0 16 16"><path d="M6 3.75L10 8L6 12.25" fill="none" stroke="#9a9a9a" stroke-width="1.3"/></svg>
<svg style="left:136px;top:387px" width="16" height="16" viewBox="0 0 16 16"><path d="M1.5 3.5h4.5l1.5 1.5h7v8.5h-13z" fill="#aeb0b2" stroke="#aeb0b2" stroke-width="0.6" stroke-linejoin="round"/></svg>
<div class="t" style="left:155.0px;top:388.0px;color:#bbbbbb;font-size:12px;letter-spacing:0.332px;">format</div>
<svg style="left:115px;top:407px" width="16" height="16" viewBox="0 0 16 16"><path d="M6 3.75L10 8L6 12.25" fill="none" stroke="#9a9a9a" stroke-width="1.3"/></svg>
<svg style="left:136px;top:407px" width="16" height="16" viewBox="0 0 16 16"><path d="M1.5 3.5h4.5l1.5 1.5h7v8.5h-13z" fill="#aeb0b2" stroke="#aeb0b2" stroke-width="0.6" stroke-linejoin="round"/></svg>
<div class="t" style="left:155.0px;top:408.0px;color:#bbbbbb;font-size:12px;letter-spacing:0.164px;">temporal</div>
<svg style="left:115px;top:427px" width="16" height="16" viewBox="0 0 16 16"><path d="M6 3.75L10 8L6 12.25" fill="none" stroke="#9a9a9a" stroke-width="1.3"/></svg>
<svg style="left:136px;top:427px" width="16" height="16" viewBox="0 0 16 16"><path d="M1.5 3.5h4.5l1.5 1.5h7v8.5h-13z" fill="#aeb0b2" stroke="#aeb0b2" stroke-width="0.6" stroke-linejoin="round"/></svg>
<div class="t" style="left:155.0px;top:428.0px;color:#bbbbbb;font-size:12px;letter-spacing:0.244px;">zone</div>
<svg style="left:115px;top:447px" width="16" height="16" viewBox="0 0 16 16"><path d="M6 3.75L10 8L6 12.25" fill="none" stroke="#9a9a9a" stroke-width="1.3"/></svg>
<svg style="left:136px;top:447px" width="16" height="16" viewBox="0 0 16 16"><path d="M8 1L14 4.4V11.6L8 14.6L2 11.6V4.4Z" fill="none" stroke="#c5e68c" stroke-width="1.3" stroke-linejoin="round"/><path d="M2.3 4.6L8 7.4L13.7 4.6M8 7.4V14.3" fill="none" stroke="#c5e68c" stroke-width="1.3"/></svg>
<div class="t" style="left:155.0px;top:448.0px;color:#bbbbbb;font-size:12px;letter-spacing:-0.001px;">Clock</div>
<svg style="left:136px;top:467px" width="16" height="16" viewBox="0 0 16 16"><path d="M8 0.9L14.1 4.4V11.3L8 14.8L1.8 11.3V4.4Z" fill="#56c3f0"/><path d="M8 3L10.2 4.8L8 6.6L5.8 4.8Z" fill="#4f4b43"/></svg>
<div class="t" style="left:155.0px;top:468.0px;color:#bbbbbb;font-size:12px;letter-spacing:-0.193px;">DateTimeException</div>
<svg style="left:136px;top:487px" width="16" height="16" viewBox="0 0 16 16"><rect x="1.9" y="1.9" width="5.2" height="5.1" fill="#f28c6e"/><path d="M11.3 1.2L14.7 4.6L11.3 8L7.9 4.6Z" fill="#f28c6e"/><rect x="1.9" y="9" width="5.2" height="5" fill="#f28c6e"/><rect x="8.9" y="9" width="5.1" height="5" fill="#f28c6e"/></svg>
<div class="t" style="left:155.0px;top:488.0px;color:#bbbbbb;font-size:12px;letter-spacing:-0.385px;">DayOfWeek</div>
<svg style="left:115px;top:507px" width="16" height="16" viewBox="0 0 16 16"><path d="M6 3.75L10 8L6 12.25" fill="none" stroke="#9a9a9a" stroke-width="1.3"/></svg>
<svg style="left:136px;top:507px" width="16" height="16" viewBox="0 0 16 16"><path d="M8 0.9L14.1 4.4V11.3L8 14.8L1.8 11.3V4.4Z" fill="#56c3f0"/><path d="M8 3L10.2 4.8L8 6.6L5.8 4.8Z" fill="#4f4b43"/><path d="M3.9 0.6V7M1.1 2.2L6.7 5.4M1.1 5.4L6.7 2.2" stroke="#4f4b43" stroke-width="2.4"/><path d="M3.9 0.8V6.8M1.3 2.3L6.5 5.3M1.3 5.3L6.5 2.3" stroke="#dedede" stroke-width="1"/></svg>
<div class="t" style="left:155.0px;top:508.0px;color:#bbbbbb;font-size:12px;letter-spacing:-0.045px;">Duration</div>
<svg style="left:136px;top:527px" width="16" height="16" viewBox="0 0 16 16"><path d="M8 0.9L14.1 4.4V11.3L8 14.8L1.8 11.3V4.4Z" fill="#56c3f0"/><path d="M8 3L10.2 4.8L8 6.6L5.8 4.8Z" fill="#4f4b43"/><path d="M3.9 0.6V7M1.1 2.2L6.7 5.4M1.1 5.4L6.7 2.2" stroke="#4f4b43" stroke-width="2.4"/><path d="M3.9 0.8V6.8M1.3 2.3L6.5 5.3M1.3 5.3L6.5 2.3" stroke="#dedede" stroke-width="1"/></svg>
<div class="t" style="left:155.0px;top:528.0px;color:#bbbbbb;font-size:12px;letter-spacing:0.139px;">Instant</div>
<svg style="left:136px;top:547px" width="16" height="16" viewBox="0 0 16 16"><rect x="0.80" y="6.15" width="4.2" height="4.2" fill="#c5e68c"/><rect x="4.20" y="6.15" width="4.2" height="4.2" fill="#c5e68c"/><rect x="7.60" y="6.15" width="4.2" height="4.2" fill="#c5e68c"/><rect x="10.95" y="6.15" width="4.2" height="4.2" fill="#c5e68c"/><rect x="4.20" y="2.90" width="4.2" height="4.2" fill="#c5e68c"/><rect x="7.60" y="9.40" width="4.2" height="4.2" fill="#c5e68c"/><rect x="2.25" y="7.60" width="1.3" height="1.3" fill="#4f4b43"/><rect x="5.65" y="7.60" width="1.3" height="1.3" fill="#4f4b43"/><rect x="9.05" y="7.60" width="1.3" height="1.3" fill="#4f4b43"/><rect x="12.40" y="7.60" width="1.3" height="1.3" fill="#4f4b43"/><rect x="5.65" y="4.35" width="1.3" height="1.3" fill="#4f4b43"/><rect x="9.05" y="10.85" width="1.3" height="1.3" fill="#4f4b43"/></svg>
<div class="t" style="left:155.0px;top:548.0px;color:#bbbbbb;font-size:12px;letter-spacing:-0.158px;">InstantSource</div>
<svg style="left:136px;top:567px" width="16" height="16" viewBox="0 0 16 16"><path d="M8 0.9L14.1 4.4V11.3L8 14.8L1.8 11.3V4.4Z" fill="#56c3f0"/><path d="M8 3L10.2 4.8L8 6.6L5.8 4.8Z" fill="#4f4b43"/><path d="M3.9 0.6V7M1.1 2.2L6.7 5.4M1.1 5.4L6.7 2.2" stroke="#4f4b43" stroke-width="2.4"/><path d="M3.9 0.8V6.8M1.3 2.3L6.5 5.3M1.3 5.3L6.5 2.3" stroke="#dedede" stroke-width="1"/></svg>
<div class="t" style="left:155.0px;top:568.0px;color:#bbbbbb;font-size:12px;letter-spacing:-0.226px;">LocalDate</div>
<svg style="left:136px;top:587px" width="16" height="16" viewBox="0 0 16 16"><path d="M8 0.9L14.1 4.4V11.3L8 14.8L1.8 11.3V4.4Z" fill="#56c3f0"/><path d="M8 3L10.2 4.8L8 6.6L5.8 4.8Z" fill="#4f4b43"/><path d="M3.9 0.6V7M1.1 2.2L6.7 5.4M1.1 5.4L6.7 2.2" stroke="#4f4b43" stroke-width="2.4"/><path d="M3.9 0.8V6.8M1.3 2.3L6.5 5.3M1.3 5.3L6.5 2.3" stroke="#dedede" stroke-width="1"/></svg>
<div class="t" style="left:155.0px;top:588.0px;color:#bbbbbb;font-size:12px;letter-spacing:-0.174px;">LocalDateTime</div>
<svg style="left:136px;top:607px" width="16" height="16" viewBox="0 0 16 16"><path d="M8 0.9L14.1 4.4V11.3L8 14.8L1.8 11.3V4.4Z" fill="#56c3f0"/><path d="M8 3L10.2 4.8L8 6.6L5.8 4.8Z" fill="#4f4b43"/><path d="M3.9 0.6V7M1.1 2.2L6.7 5.4M1.1 5.4L6.7 2.2" stroke="#4f4b43" stroke-width="2.4"/><path d="M3.9 0.8V6.8M1.3 2.3L6.5 5.3M1.3 5.3L6.5 2.3" stroke="#dedede" stroke-width="1"/></svg>
<div class="t" style="left:155.0px;top:608.0px;color:#bbbbbb;font-size:12px;letter-spacing:-0.212px;">LocalTime</div>
<svg style="left:136px;top:627px" width="16" height="16" viewBox="0 0 16 16"><rect x="1.9" y="1.9" width="5.2" height="5.1" fill="#f28c6e"/><path d="M11.3 1.2L14.7 4.6L11.3 8L7.9 4.6Z" fill="#f28c6e"/><rect x="1.9" y="9" width="5.2" height="5" fill="#f28c6e"/><rect x="8.9" y="9" width="5.1" height="5" fill="#f28c6e"/></svg>
<div class="t" style="left:155.0px;top:628.0px;color:#bbbbbb;font-size:12px;letter-spacing:0.329px;">Month</div>
<svg style="left:136px;top:647px" width="16" height="16" viewBox="0 0 16 16"><path d="M8 0.9L14.1 4.4V11.3L8 14.8L1.8 11.3V4.4Z" fill="#56c3f0"/><path d="M8 3L10.2 4.8L8 6.6L5.8 4.8Z" fill="#4f4b43"/><path d="M3.9 0.6V7M1.1 2.2L6.7 5.4M1.1 5.4L6.7 2.2" stroke="#4f4b43" stroke-width="2.4"/><path d="M3.9 0.8V6.8M1.3 2.3L6.5 5.3M1.3 5.3L6.5 2.3" stroke="#dedede" stroke-width="1"/></svg>
<div class="t" style="left:155.0px;top:648.0px;color:#bbbbbb;font-size:12px;letter-spacing:0.163px;">MonthDay</div>
<svg style="left:136px;top:667px" width="16" height="16" viewBox="0 0 16 16"><path d="M8 0.9L14.1 4.4V11.3L8 14.8L1.8 11.3V4.4Z" fill="#56c3f0"/><path d="M8 3L10.2 4.8L8 6.6L5.8 4.8Z" fill="#4f4b43"/><path d="M3.9 0.6V7M1.1 2.2L6.7 5.4M1.1 5.4L6.7 2.2" stroke="#4f4b43" stroke-width="2.4"/><path d="M3.9 0.8V6.8M1.3 2.3L6.5 5.3M1.3 5.3L6.5 2.3" stroke="#dedede" stroke-width="1"/></svg>
<div class="t" style="left:155.0px;top:668.0px;color:#bbbbbb;font-size:12px;letter-spacing:-0.098px;">OffsetDateTime</div>
<svg style="left:136px;top:687px" width="16" height="16" viewBox="0 0 16 16"><path d="M8 0.9L14.1 4.4V11.3L8 14.8L1.8 11.3V4.4Z" fill="#56c3f0"/><path d="M8 3L10.2 4.8L8 6.6L5.8 4.8Z" fill="#4f4b43"/><path d="M3.9 0.6V7M1.1 2.2L6.7 5.4M1.1 5.4L6.7 2.2" stroke="#4f4b43" stroke-width="2.4"/><path d="M3.9 0.8V6.8M1.3 2.3L6.5 5.3M1.3 5.3L6.5 2.3" stroke="#dedede" stroke-width="1"/></svg>
<div class="t" style="left:155.0px;top:688.0px;color:#bbbbbb;font-size:12px;letter-spacing:-0.102px;">OffsetTime</div>
<svg style="left:136px;top:707px" width="16" height="16" viewBox="0 0 16 16"><path d="M8 0.9L14.1 4.4V11.3L8 14.8L1.8 11.3V4.4Z" fill="#56c3f0"/><path d="M8 3L10.2 4.8L8 6.6L5.8 4.8Z" fill="#4f4b43"/><path d="M3.9 0.6V7M1.1 2.2L6.7 5.4M1.1 5.4L6.7 2.2" stroke="#4f4b43" stroke-width="2.4"/><path d="M3.9 0.8V6.8M1.3 2.3L6.5 5.3M1.3 5.3L6.5 2.3" stroke="#dedede" stroke-width="1"/></svg>
<div class="t" style="left:155.0px;top:708.0px;color:#bbbbbb;font-size:12px;letter-spacing:-0.115px;">Period</div>
<svg style="left:136px;top:727px" width="16" height="16" viewBox="0 0 16 16"><path d="M8 0.9L14.1 4.4V11.3L8 14.8L1.8 11.3V4.4Z" fill="#56c3f0"/><path d="M8 3L10.2 4.8L8 6.6L5.8 4.8Z" fill="#4f4b43"/><path d="M3.9 0.6V7M1.1 2.2L6.7 5.4M1.1 5.4L6.7 2.2" stroke="#4f4b43" stroke-width="2.4"/><path d="M3.9 0.8V6.8M1.3 2.3L6.5 5.3M1.3 5.3L6.5 2.3" stroke="#dedede" stroke-width="1"/></svg>
<div class="t" style="left:155.0px;top:728.0px;color:#bbbbbb;font-size:12px;letter-spacing:-0.558px;">Ser</div>
<svg style="left:136px;top:747px" width="16" height="16" viewBox="0 0 16 16"><path d="M8 0.9L14.1 4.4V11.3L8 14.8L1.8 11.3V4.4Z" fill="#56c3f0"/><path d="M8 3L10.2 4.8L8 6.6L5.8 4.8Z" fill="#4f4b43"/><path d="M3.9 0.6V7M1.1 2.2L6.7 5.4M1.1 5.4L6.7 2.2" stroke="#4f4b43" stroke-width="2.4"/><path d="M3.9 0.8V6.8M1.3 2.3L6.5 5.3M1.3 5.3L6.5 2.3" stroke="#dedede" stroke-width="1"/></svg>
<div class="t" style="left:155.0px;top:748.0px;color:#bbbbbb;font-size:12px;letter-spacing:0.188px;">Year</div>
<svg style="left:136px;top:767px" width="16" height="16" viewBox="0 0 16 16"><path d="M8 0.9L14.1 4.4V11.3L8 14.8L1.8 11.3V4.4Z" fill="#56c3f0"/><path d="M8 3L10.2 4.8L8 6.6L5.8 4.8Z" fill="#4f4b43"/><path d="M3.9 0.6V7M1.1 2.2L6.7 5.4M1.1 5.4L6.7 2.2" stroke="#4f4b43" stroke-width="2.4"/><path d="M3.9 0.8V6.8M1.3 2.3L6.5 5.3M1.3 5.3L6.5 2.3" stroke="#dedede" stroke-width="1"/></svg>
<div class="t" style="left:155.0px;top:768.0px;color:#bbbbbb;font-size:12px;letter-spacing:-0.178px;">YearMonth</div>
<svg style="left:136px;top:787px" width="16" height="16" viewBox="0 0 16 16"><path d="M8 0.9L14.1 4.4V11.3L8 14.8L1.8 11.3V4.4Z" fill="#56c3f0"/><path d="M8 3L10.2 4.8L8 6.6L5.8 4.8Z" fill="#4f4b43"/><path d="M3.9 0.6V7M1.1 2.2L6.7 5.4M1.1 5.4L6.7 2.2" stroke="#4f4b43" stroke-width="2.4"/><path d="M3.9 0.8V6.8M1.3 2.3L6.5 5.3M1.3 5.3L6.5 2.3" stroke="#dedede" stroke-width="1"/></svg>
<div class="t" style="left:155.0px;top:788.0px;color:#bbbbbb;font-size:12px;letter-spacing:-0.277px;">ZonedDateTime</div>
<svg style="left:136px;top:807px" width="16" height="16" viewBox="0 0 16 16"><path d="M8 1L14 4.4V11.6L8 14.6L2 11.6V4.4Z" fill="none" stroke="#c5e68c" stroke-width="1.3" stroke-linejoin="round"/><path d="M2.3 4.6L8 7.4L13.7 4.6M8 7.4V14.3" fill="none" stroke="#c5e68c" stroke-width="1.3"/></svg>
<div class="t" style="left:155.0px;top:808.0px;color:#ffffff;font-size:12px;letter-spacing:-0.227px;">ZoneId</div>
<svg style="left:136px;top:827px" width="16" height="16" viewBox="0 0 16 16"><path d="M8 0.9L14.1 4.4V11.3L8 14.8L1.8 11.3V4.4Z" fill="#56c3f0"/><path d="M8 3L10.2 4.8L8 6.6L5.8 4.8Z" fill="#4f4b43"/><path d="M3.9 0.6V7M1.1 2.2L6.7 5.4M1.1 5.4L6.7 2.2" stroke="#4f4b43" stroke-width="2.4"/><path d="M3.9 0.8V6.8M1.3 2.3L6.5 5.3M1.3 5.3L6.5 2.3" stroke="#dedede" stroke-width="1"/></svg>
<div class="t" style="left:155.0px;top:828.0px;color:#bbbbbb;font-size:12px;letter-spacing:-0.215px;">ZoneOffset</div>
<svg style="left:136px;top:847px" width="16" height="16" viewBox="0 0 16 16"><path d="M8 0.9L14.1 4.4V11.3L8 14.8L1.8 11.3V4.4Z" fill="#56c3f0"/><path d="M8 3L10.2 4.8L8 6.6L5.8 4.8Z" fill="#4f4b43"/><path d="M3.9 0.6V7M1.1 2.2L6.7 5.4M1.1 5.4L6.7 2.2" stroke="#4f4b43" stroke-width="2.4"/><path d="M3.9 0.8V6.8M1.3 2.3L6.5 5.3M1.3 5.3L6.5 2.3" stroke="#dedede" stroke-width="1"/></svg>
<div class="t" style="left:155.0px;top:848.0px;color:#bbbbbb;font-size:12px;letter-spacing:-0.238px;">ZoneRegion</div>
<svg style="left:97px;top:867px" width="16" height="16" viewBox="0 0 16 16"><path d="M6 3.75L10 8L6 12.25" fill="none" stroke="#9a9a9a" stroke-width="1.3"/></svg>
<svg style="left:118px;top:867px" width="16" height="16" viewBox="0 0 16 16"><path d="M1.5 3.5h4.5l1.5 1.5h7v8.5h-13z" fill="#7d8a95" stroke="#7d8a95" stroke-width="0.6" stroke-linejoin="round"/><path d="M8 15L12.5 10.5M10 10H13V13" fill="none" stroke="#fff" stroke-width="1.1"/></svg>
<div class="t" style="left:137.0px;top:868.0px;color:#bbbbbb;font-size:12px;letter-spacing:1.165px;">util</div>
<svg style="left:79px;top:887px" width="16" height="16" viewBox="0 0 16 16"><path d="M6 3.75L10 8L6 12.25" fill="none" stroke="#9a9a9a" stroke-width="1.3"/></svg>
<svg style="left:100px;top:887px" width="16" height="16" viewBox="0 0 16 16"><path d="M1.5 3.5h4.5l1.5 1.5h7v8.5h-13z" fill="#aeb0b2" stroke="#aeb0b2" stroke-width="0.6" stroke-linejoin="round"/></svg>
<div class="t" style="left:119.0px;top:888.0px;color:#bbbbbb;font-size:12px;letter-spacing:-0.203px;">javax</div>
<svg style="left:79px;top:907px" width="16" height="16" viewBox="0 0 16 16"><path d="M6 3.75L10 8L6 12.25" fill="none" stroke="#9a9a9a" stroke-width="1.3"/></svg>
<svg style="left:100px;top:907px" width="16" height="16" viewBox="0 0 16 16"><path d="M1.5 3.5h4.5l1.5 1.5h7v8.5h-13z" fill="#aeb0b2" stroke="#aeb0b2" stroke-width="0.6" stroke-linejoin="round"/></svg>
<div class="t" style="left:119.0px;top:908.0px;color:#bbbbbb;font-size:12px;letter-spacing:0.164px;">jdk.internal</div>
<svg style="left:79px;top:927px" width="16" height="16" viewBox="0 0 16 16"><path d="M6 3.75L10 8L6 12.25" fill="none" stroke="#9a9a9a" stroke-width="1.3"/></svg>
<svg style="left:100px;top:927px" width="16" height="16" viewBox="0 0 16 16"><path d="M1.5 3.5h4.5l1.5 1.5h7v8.5h-13z" fill="#3a8fd8" stroke="#3a8fd8" stroke-width="0.6" stroke-linejoin="round"/><path d="M13.5 8.5H8.5L11 11.5L8.5 14.5H13.5" fill="none" stroke="#fff" stroke-width="1.1"/></svg>
<div class="t" style="left:119.0px;top:928.0px;color:#bbbbbb;font-size:12px;letter-spacing:-0.282px;">META-INF.services</div>
<svg style="left:79px;top:947px" width="16" height="16" viewBox="0 0 16 16"><path d="M6 3.75L10 8L6 12.25" fill="none" stroke="#9a9a9a" stroke-width="1.3"/></svg>
<svg style="left:100px;top:947px" width="16" height="16" viewBox="0 0 16 16"><path d="M1.5 3.5h4.5l1.5 1.5h7v8.5h-13z" fill="#aeb0b2" stroke="#aeb0b2" stroke-width="0.6" stroke-linejoin="round"/></svg>
<div class="t" style="left:119.0px;top:948.0px;color:#bbbbbb;font-size:12px;letter-spacing:-0.449px;">sun</div>
<svg style="left:100px;top:967px" width="16" height="16" viewBox="0 0 16 16"><path d="M2.5 1.5H10L13.5 5V14.5H2.5Z" fill="none" stroke="#40b6e0" stroke-width="1.1"/><text x="4" y="7.5" font-size="5.5" font-family="Liberation Mono" font-weight="bold" fill="#40b6e0">01</text><text x="4" y="13" font-size="5.5" font-family="Liberation Mono" font-weight="bold" fill="#40b6e0">10</text></svg>
<div class="t" style="left:119.0px;top:968.0px;color:#bbbbbb;font-size:12px;letter-spacing:0.095px;">module-info.class</div>
<svg style="left:347px;top:63px" width="16" height="16" viewBox="0 0 16 16"><path d="M8 1L14 4.4V11.6L8 14.6L2 11.6V4.4Z" fill="none" stroke="#c5e68c" stroke-width="1.3" stroke-linejoin="round"/><path d="M2.3 4.6L8 7.4L13.7 4.6M8 7.4V14.3" fill="none" stroke="#c5e68c" stroke-width="1.3"/></svg>
<div class="t" style="left:368.0px;top:63.5px;color:#bbbbbb;font-size:12px;letter-spacing:-0.246px;">ZoneId.java</div>
<svg style="left:436px;top:67px" width="8" height="8" viewBox="0 0 8 8"><path d="M1 1L7 7M7 1L1 7" stroke="#a5b3ba" stroke-width="1.1"/></svg>
<svg style="left:458px;top:63px" width="17" height="16" viewBox="0 0 16 16"><rect x="0.80" y="6.15" width="4.2" height="4.2" fill="#c5e68c"/><rect x="4.20" y="6.15" width="4.2" height="4.2" fill="#c5e68c"/><rect x="7.60" y="6.15" width="4.2" height="4.2" fill="#c5e68c"/><rect x="10.95" y="6.15" width="4.2" height="4.2" fill="#c5e68c"/><rect x="4.20" y="2.90" width="4.2" height="4.2" fill="#c5e68c"/><rect x="7.60" y="9.40" width="4.2" height="4.2" fill="#c5e68c"/><rect x="2.25" y="7.60" width="1.3" height="1.3" fill="#45433f"/><rect x="5.65" y="7.60" width="1.3" height="1.3" fill="#45433f"/><rect x="9.05" y="7.60" width="1.3" height="1.3" fill="#45433f"/><rect x="12.40" y="7.60" width="1.3" height="1.3" fill="#45433f"/><rect x="5.65" y="4.35" width="1.3" height="1.3" fill="#45433f"/><rect x="9.05" y="10.85" width="1.3" height="1.3" fill="#45433f"/></svg>
<div class="t" style="left:479.0px;top:63.5px;color:#bbbbbb;font-size:12px;letter-spacing:-0.212px;">Map.java</div>
<svg style="left:534px;top:67px" width="8" height="8" viewBox="0 0 8 8"><path d="M1 1L7 7M7 1L1 7" stroke="#a5b3ba" stroke-width="1.1"/></svg>
<svg style="left:1882px;top:63px" width="8" height="16" viewBox="0 0 8 16"><circle cx="4" cy="3" r="1.5" fill="#f3c230"/><circle cx="4" cy="8" r="1.5" fill="#f3c230"/><circle cx="4" cy="13" r="1.5" fill="#f3c230"/></svg>
<svg style="left:347px;top:90px" width="17" height="17" viewBox="0 0 17 17"><circle cx="6" cy="6.5" r="4" fill="none" stroke="#afb1b3" stroke-width="1.4"/><path d="M9 9.5L12.5 13" stroke="#afb1b3" stroke-width="1.6"/><path d="M12 6H16L14 8.5Z" fill="#afb1b3"/></svg>
<div class="t" style="left:369.0px;top:90.5px;color:#bbbbbb;font-size:12px;letter-spacing:-1.446px;">BET</div>
<svg style="left:668px;top:95px" width="8" height="8" viewBox="0 0 8 8"><path d="M1 1L7 7M7 1L1 7" stroke="#9aabb2" stroke-width="1.1"/></svg>
<svg style="left:686px;top:92px" width="16" height="12" viewBox="0 0 16 12"><path d="M14 1V6.5H2.5M6 3L2.5 6.5L6 10" fill="none" stroke="#bbbbbb" stroke-width="1.5"/></svg>
<div class="a" style="left:711px;top:89px;width:1px;height:20px;background:#55595b"></div>
<div class="a" style="left:717px;top:88px;width:22px;height:21px;background:#5b5f61;border-radius:3px"></div>
<div class="t" style="left:719.0px;top:90.5px;color:#5fa8e8;font-size:12px;letter-spacing:1.161px;">Aa</div>
<div class="a" style="left:743px;top:88px;width:22px;height:21px;background:#5b5f61;border-radius:3px"></div>
<div class="t" style="left:747.5px;top:90.5px;color:#e6e84f;font-size:13px;font-weight:bold;">W</div>
<svg style="left:773px;top:93px" width="14" height="14" viewBox="0 0 14 14"><circle cx="2.2" cy="11.5" r="1.3" fill="#8fa7b3"/><path d="M9 2V10M5 6H13M6.2 3.2L11.8 8.8M11.8 3.2L6.2 8.8" stroke="#8fa7b3" stroke-width="1.2"/></svg>
<div class="a" style="left:794px;top:85px;width:1104px;height:28px;background:#3c3f41"></div>
<div class="t" style="left:827.0px;top:90.5px;color:#bbbbbb;font-size:11px;letter-spacing:-0.431px;">1/2</div>
<svg style="left:870px;top:91px" width="15" height="15" viewBox="0 0 15 15"><path d="M7.5 13V2.5M3 7L7.5 2.5L12 7" fill="none" stroke="#5fb8a8" stroke-width="1.5"/></svg>
<svg style="left:896px;top:91px" width="15" height="15" viewBox="0 0 15 15"><path d="M7.5 2V12.5M3 8L7.5 12.5L12 8" fill="none" stroke="#5fb8a8" stroke-width="1.5"/></svg>
<svg style="left:922px;top:92px" width="15" height="14" viewBox="0 0 15 14"><rect x="1.5" y="1.5" width="11" height="11" fill="none" stroke="#cfcfcf" stroke-width="1.3"/><rect x="1.5" y="7" width="6" height="5.5" fill="#cfcfcf"/></svg>
<div class="a" style="left:946px;top:89px;width:1px;height:20px;background:#55595b"></div>
<svg style="left:955px;top:90px" width="17" height="18" viewBox="0 0 17 18"><path d="M5 2V15M2.5 2H7.5M2.5 15H7.5" stroke="#7fc35c" stroke-width="1.6"/><path d="M9 13H15M12 10V16" stroke="#7fc35c" stroke-width="1.4"/></svg>
<svg style="left:980px;top:90px" width="17" height="18" viewBox="0 0 17 18"><path d="M5 2V15M2.5 2H7.5M2.5 15H7.5" stroke="#e0303a" stroke-width="1.6"/><path d="M9.5 14H15" stroke="#e0303a" stroke-width="1.4"/></svg>
<svg style="left:1006px;top:90px" width="17" height="18" viewBox="0 0 17 18"><path d="M5 2V15M2.5 2H7.5M2.5 15H7.5M12 2V15M9.5 2H14.5M9.5 15H14.5" stroke="#5fb8b0" stroke-width="1.6"/></svg>
<div class="a" style="left:1031px;top:89px;width:1px;height:20px;background:#55595b"></div>
<svg style="left:1040px;top:91px" width="17" height="16" viewBox="0 0 17 16"><path d="M1 3H9M1 6.5H7M1 10H7M1 13.5H9" stroke="#c17ee6" stroke-width="1.4"/><path d="M12.5 5V15M10.5 5H14.5M10.5 15H14.5" stroke="#c17ee6" stroke-width="1.2"/></svg>
<svg style="left:1066px;top:91px" width="15" height="15" viewBox="0 0 15 15"><path d="M1 1.5H14L9 7.5V13.5L6 12V7.5Z" fill="#3b9be8"/></svg>
<svg style="left:1884px;top:94px" width="8" height="8" viewBox="0 0 8 8"><path d="M1 1L7 7M7 1L1 7" stroke="#a5b3ba" stroke-width="1.1"/></svg>
<div class="t" style="left:1786.0px;top:119.5px;color:#bbbbbb;font-size:12px;letter-spacing:-0.156px;">Reader Mode</div>
<div class="a" style="left:1870px;top:118px;width:1px;height:18px;background:#4a4a4a"></div>
<svg style="left:1876px;top:118px" width="18" height="18" viewBox="0 0 18 18"><path d="M1.40 11.11 L6.45 15.67 L16.46 5.66 L14.34 3.54 L6.35 11.53 L3.40 8.89Z" fill="none" stroke="#97d06a" stroke-width="1.2" stroke-linejoin="miter"/></svg>
<div class="a" style="left:1889px;top:291px;width:8px;height:68px;background:#484848"></div>
<div class="a" style="left:1884px;top:318px;width:13px;height:1px;background:#5b8f58"></div>
<div class="a" style="left:1884px;top:370px;width:13px;height:1px;background:#5b8f58"></div>
<div class="a" style="left:1391px;top:125px;width:0;height:0"></div>
<svg style="left:414px;top:927px" width="11" height="14" viewBox="0 0 11 14"><path d="M1 13V5L5.5 1L10 5V13Z" fill="#313335" stroke="#6a6a6a" stroke-width="1"/><path d="M3 7.5H8" stroke="#808080" stroke-width="1"/></svg>
<div class="t" style="left:390.0px;top:967.5px;color:#d8d8d8;font-size:13px;font-weight:bold;">@</div>
<div class="t" style="left:47.0px;top:993.5px;color:#bbbbbb;font-size:12px;letter-spacing:0.222px;">Git</div>
<svg style="left:30px;top:995px" width="13" height="13" viewBox="0 0 14 14"><path d="M3.5 2.5V11.5M10.5 3.5C10.5 7.5 3.5 6.5 3.5 10" fill="none" stroke="#3a9be0" stroke-width="1.3"/><circle cx="3.5" cy="2.2" r="1.5" fill="none" stroke="#3a9be0" stroke-width="1.1"/><circle cx="3.5" cy="12" r="1.5" fill="none" stroke="#3a9be0" stroke-width="1.1"/><circle cx="10.5" cy="2.8" r="1.5" fill="none" stroke="#3a9be0" stroke-width="1.1"/></svg>
<div class="t" style="left:97.0px;top:993.5px;color:#bbbbbb;font-size:12px;letter-spacing:-0.672px;">Run</div>
<svg style="left:82px;top:995px" width="13" height="13" viewBox="0 0 14 14"><path d="M2 1.5L11 7L2 12.5Z" fill="#a8d07a"/><circle cx="10.5" cy="12" r="2.2" fill="#28c828"/></svg>
<div class="t" style="left:153.0px;top:993.5px;color:#bbbbbb;font-size:12px;letter-spacing:0.127px;">Debug</div>
<svg style="left:138px;top:995px" width="13" height="13" viewBox="0 0 14 14"><ellipse cx="6.5" cy="7.5" rx="4.5" ry="5" fill="#e05570"/><rect x="5" y="5.5" width="3" height="1.2" fill="#3c3f41"/><rect x="5" y="8.5" width="3" height="1.2" fill="#3c3f41"/><circle cx="11" cy="12.5" r="2.2" fill="#28c828"/></svg>
<div class="t" style="left:227.0px;top:993.5px;color:#bbbbbb;font-size:12px;letter-spacing:-0.169px;">Terminal</div>
<svg style="left:210px;top:995px" width="13" height="13" viewBox="0 0 14 14"><rect x="1" y="2" width="12" height="10" fill="#a36aa6"/><path d="M3 5L5.5 7L3 9" fill="none" stroke="#3c3f41" stroke-width="1"/></svg>
<div class="t" style="left:309.0px;top:993.5px;color:#bbbbbb;font-size:12px;letter-spacing:-0.461px;">Problems</div>
<svg style="left:292px;top:995px" width="13" height="13" viewBox="0 0 14 14"><path d="M2 11H12V12.5H2ZM3.5 11V7A3.5 3.5 0 0 1 10.5 7V11" fill="#d0d0d0"/><path d="M7 0.5V2.5M1.5 3L3 4.5M12.5 3L11 4.5" stroke="#d0d0d0" stroke-width="1.1"/></svg>
<div class="t" style="left:394.0px;top:993.5px;color:#bbbbbb;font-size:12px;letter-spacing:-0.153px;">Endpoints</div>
<svg style="left:377px;top:995px" width="13" height="13" viewBox="0 0 14 14"><circle cx="7" cy="3" r="2" fill="none" stroke="#3fb3a6" stroke-width="1.3"/><circle cx="2.5" cy="11" r="2" fill="none" stroke="#3fb3a6" stroke-width="1.3"/><circle cx="11.5" cy="11" r="2" fill="none" stroke="#3fb3a6" stroke-width="1.3"/><path d="M6 4.8L3.5 9.2M8 4.8L10.5 9.2" stroke="#3fb3a6" stroke-width="1.2"/></svg>
<div class="t" style="left:485.0px;top:993.5px;color:#bbbbbb;font-size:12px;letter-spacing:-0.126px;">Profiler</div>
<svg style="left:468px;top:995px" width="13" height="13" viewBox="0 0 14 14"><circle cx="7" cy="7" r="5.5" fill="none" stroke="#7fc35c" stroke-width="1.4"/><path d="M7 7L9.5 4M4 8H10" stroke="#7fc35c" stroke-width="1.2"/></svg>
<div class="t" style="left:561.0px;top:993.5px;color:#bbbbbb;font-size:12px;letter-spacing:-0.311px;">Dependencies</div>
<svg style="left:545px;top:995px" width="13" height="13" viewBox="0 0 14 14"><rect x="1" y="1" width="5" height="5" fill="#7fc35c"/><rect x="8" y="1" width="5" height="5" fill="#7fc35c"/><rect x="1" y="8" width="5" height="5" fill="#7fc35c"/><rect x="8" y="8" width="5" height="5" fill="#7fc35c"/></svg>
<div class="t" style="left:672.0px;top:993.5px;color:#bbbbbb;font-size:12px;letter-spacing:-0.362px;">TODO</div>
<svg style="left:657px;top:995px" width="13" height="13" viewBox="0 0 14 14"><rect x="1.5" y="1.5" width="11" height="11" fill="none" stroke="#c0525e" stroke-width="1.3"/><rect x="4.5" y="4" width="5" height="5" fill="none" stroke="#c0525e" stroke-width="1.2"/></svg>
<div class="t" style="left:742.0px;top:993.5px;color:#bbbbbb;font-size:12px;letter-spacing:-0.115px;">Spring</div>
<svg style="left:725px;top:995px" width="13" height="13" viewBox="0 0 14 14"><circle cx="7" cy="7" r="6" fill="#6db33f"/><path d="M3.5 10.5C5 6 9 5.5 11.5 3.5C11 8.5 7.5 11 3.5 10.5Z" fill="#3c3f41"/></svg>
<div class="t" style="left:812.0px;top:993.5px;color:#bbbbbb;font-size:12px;letter-spacing:-0.137px;">Build</div>
<svg style="left:795px;top:995px" width="13" height="13" viewBox="0 0 14 14"><rect x="2" y="1.5" width="10" height="11" rx="1" fill="#b87c8a"/><rect x="2" y="6" width="10" height="1.2" fill="#3c3f41"/></svg>
<div class="t" style="left:875.0px;top:993.5px;color:#bbbbbb;font-size:12px;letter-spacing:-0.752px;">Services</div>
<svg style="left:858px;top:995px" width="13" height="13" viewBox="0 0 14 14"><circle cx="7" cy="7" r="3.2" fill="none" stroke="#7fc35c" stroke-width="2.2"/><path d="M7 0.5V3M7 11V13.5M0.5 7H3M11 7H13.5M2.4 2.4L4.2 4.2M9.8 9.8L11.6 11.6M2.4 11.6L4.2 9.8M9.8 4.2L11.6 2.4" stroke="#7fc35c" stroke-width="2"/></svg>
<svg style="left:5px;top:1013px" width="17" height="17" viewBox="0 0 17 17"><path d="M8.5 2L15 6L8.5 10L2 6Z" fill="#e8e8e8"/><path d="M2 9.5L8.5 13.5L15 9.5" fill="none" stroke="#e8e8e8" stroke-width="1.3"/></svg>
<div class="t" style="left:27.0px;top:1013.5px;color:#bbbbbb;font-size:12px;letter-spacing:0.014px;">All files are up-to-date (2 minutes ago)</div>
<svg style="left:1520px;top:1014px" width="16" height="16" viewBox="0 0 16 16"><circle cx="5" cy="4.5" r="3.3" fill="none" stroke="#d6d6d6" stroke-width="1.4"/><circle cx="11" cy="4.5" r="3.3" fill="none" stroke="#d6d6d6" stroke-width="1.4"/><path d="M2 7.5C0.8 8 0.6 9.5 0.8 11C1.2 13.5 4 14.5 8 14.5C12 14.5 14.8 13.5 15.2 11C15.4 9.5 15.2 8 14 7.5" fill="none" stroke="#d6d6d6" stroke-width="1.4"/><rect x="5.6" y="9.3" width="1.4" height="2.6" fill="#d6d6d6"/><rect x="9" y="9.3" width="1.4" height="2.6" fill="#d6d6d6"/></svg>
<div class="t" style="left:1549.0px;top:1013.5px;color:#bbbbbb;font-size:12px;letter-spacing:-0.399px;">202:15 (3 chars)</div>
<div class="t" style="left:1641.0px;top:1013.5px;color:#8c8c8c;font-size:12px;letter-spacing:-1.502px;">LF</div>
<div class="t" style="left:1665.0px;top:1013.5px;color:#bbbbbb;font-size:12px;letter-spacing:-0.400px;">UTF-8</div>
<div class="t" style="left:1708.0px;top:1013.5px;color:#bbbbbb;font-size:12px;letter-spacing:-0.379px;">4 spaces</div>
<svg style="left:1764px;top:1014px" width="14" height="15" viewBox="0 0 14 15"><path d="M3 2V13M11 2V5C11 8.5 3 7 3 10.5" fill="none" stroke="#3a9be0" stroke-width="1.4"/><circle cx="3" cy="2.5" r="1.6" fill="#3a9be0"/><circle cx="11" cy="2.5" r="1.6" fill="#3a9be0"/><circle cx="3" cy="13" r="1.6" fill="#3a9be0"/></svg>
<div class="t" style="left:1782.0px;top:1013.5px;color:#bbbbbb;font-size:12px;letter-spacing:-0.005px;">develop</div>
<svg style="left:1835px;top:1015px" width="14" height="14" viewBox="0 0 14 14"><circle cx="7" cy="7" r="5.5" fill="none" stroke="#bbbbbb" stroke-width="1.2"/><rect x="5" y="5" width="4" height="4" fill="#bbbbbb"/></svg>
<div class="t" style="left:1852.0px;top:1013.5px;color:#bbbbbb;font-size:12px;letter-spacing:-0.671px;">up-to-date</div>
</body></html>
